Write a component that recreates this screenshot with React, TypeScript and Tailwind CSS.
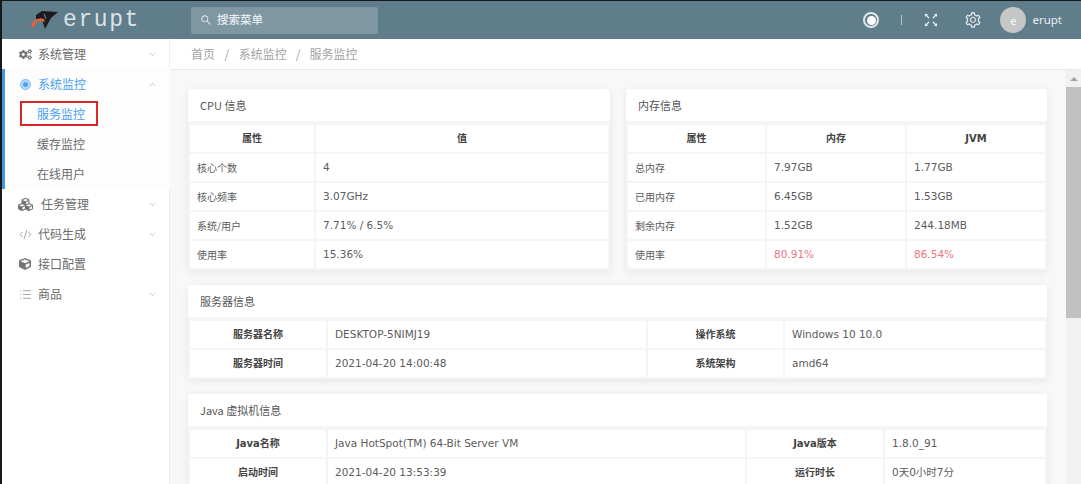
import type { ReactNode } from "react";
import { ChevronDown, ChevronUp, CodeXml, List } from "lucide-react";
import { FaCogs, FaCube, FaCubes } from "react-icons/fa";
import { AiOutlineFullscreen, AiOutlineSearch, AiOutlineSetting } from "react-icons/ai";

const cn = "font-['Noto_Sans_CJK_SC','Noto_Sans',sans-serif]";
const num = "font-['DejaVu_Sans','Noto_Sans_CJK_SC',sans-serif]";

function Logo() {
  return (
    <svg width="28" height="20" viewBox="0 0 28 20" className="shrink-0">
      <path d="M5 5 L11 1 L27 2 L20 8 L14 19 L11 10 L5 9 Z" fill="#1c1c1e" />
      <path d="M0 17 L2 11 Q8 7 13 9 L14 12 Q8 10 5 12 L3 17 Z" fill="#e8613a" />
      <path d="M13 4 L15 9" stroke="#6f8fb5" strokeWidth="1" />
    </svg>
  );
}

function MenuItem(props: { icon: ReactNode; label: string; arrow?: boolean; gap?: string }) {
  return (
    <div className="h-[30px] flex items-center pl-[15px] pr-[12px] text-[#6b6b6b]">
      <span className="w-[16px] flex justify-center shrink-0 text-[#747474]">{props.icon}</span>
      <span className={"text-[12px] flex-1 " + (props.gap ?? "ml-[5px]")}>{props.label}</span>
      {props.arrow && <ChevronDown size={9} strokeWidth={1.5} className="text-[#999]" />}
    </div>
  );
}

function Cell(props: { children: ReactNode; head?: boolean; tone?: "red" }) {
  return (
    <div
      className={
        "bg-white flex items-center h-[27px] " +
        (props.head
          ? "justify-center font-bold text-[#444] text-[10px] " + num
          : "px-[7px] " +
            (props.tone === "red" ? "text-[#ec7582] " : "text-[#5c5c5c] ") +
            "text-[10.5px] " + num)
      }
    >
      {props.children}
    </div>
  );
}

function Label(props: { children: ReactNode }) {
  return <div className={"bg-white flex items-center h-[27px] px-[7px] pb-[1px] text-[10px] text-[#5c5c5c] " + cn}>{props.children}</div>;
}

function Card(props: { title: string; children: ReactNode; className?: string }) {
  return (
    <section className={"bg-white rounded-[2px] shadow-[0_2px_8px_rgba(0,0,0,0.08)] " + (props.className ?? "")}>
      <h2 className={"h-[34px] flex items-center pl-[12px] text-[11px] text-[#555] border-b-2 border-[#f5f5f6] " + cn}>{props.title}</h2>
      {props.children}
    </section>
  );
}

const memory = [
  ["总内存", "7.97GB", "1.77GB"],
  ["已用内存", "6.45GB", "1.53GB"],
  ["剩余内存", "1.52GB", "244.18MB"],
];

const cpu = [
  ["核心个数", "4"],
  ["核心频率", "3.07GHz"],
  ["系统/用户", "7.71% / 6.5%"],
  ["使用率", "15.36%"],
];

export default function App() {
  return (
    <div className={"w-[1081px] h-[484px] overflow-hidden bg-[#17181c] pt-px pl-[2px] flex flex-col " + cn}>
      <header className="h-[38px] shrink-0 bg-[#607d8b] flex items-center text-white">
        <div className="w-[189px] flex items-center pl-[29px] shrink-0">
          <Logo />
          <span className="ml-[4px] mt-[1px] font-['Liberation_Mono',monospace] text-[23px] leading-none tracking-[1.6px] text-[#dce3e6]">erupt</span>
        </div>
        <div className="w-[187px] h-[27px] bg-[#7f97a2] rounded-[2px] flex items-center pl-[9px] text-[#e6ecef]">
          <AiOutlineSearch size={12} />
          <span className="ml-[5px] text-[11.5px] font-medium">搜索菜单</span>
        </div>
        <div className="flex-1" />
        <div className="w-[16px] h-[16px] rounded-full border-[2px] border-[#dfe6e9] flex items-center justify-center">
          <span className="w-[9px] h-[9px] rounded-full bg-white" />
        </div>
        <span className="ml-[22px] w-px h-[10px] bg-[#b5c4cb]" />
        <AiOutlineFullscreen size={18} className="ml-[20px] text-[#e8edf0]" />
        <AiOutlineSetting size={18} className="ml-[24px] text-[#e3e9ec]" />
        <span className="ml-[18px] w-[26px] h-[26px] rounded-full bg-[#c5c7c6] flex items-center justify-center text-[11px]">e</span>
        <span className="ml-[6px] mr-[19px] text-[11.5px] font-['Noto_Sans',sans-serif] text-[#e9eef0]">erupt</span>
      </header>

      <div className="flex flex-1 min-h-0 bg-white">
        <aside className="w-[168px] shrink-0 border-r border-[#eeeeee]">
          <MenuItem icon={<FaCogs size={13} />} label="系统管理" arrow />
          <div className="border-l-[3px] border-[#3d9be3] -mr-px bg-[#fdfdfd]">
            <div className="h-[30px] flex items-center pl-[12px] pr-[13px] text-[#4a9ff0]">
              <span className="w-[16px] flex justify-center shrink-0">
                <span className="w-[11px] h-[11px] rounded-full border border-[#7db9f2] bg-[#b9dafa] flex items-center justify-center">
                  <span className="w-[5px] h-[5px] rounded-full bg-[#4a9ff0]" />
                </span>
              </span>
              <span className="ml-[5px] text-[12px] flex-1">系统监控</span>
              <ChevronUp size={9} strokeWidth={1.5} className="text-[#999]" />
            </div>
            <div className="h-[30px] flex items-start pt-[2px] pl-[15px]">
              <span className="h-[25px] w-[78px] border-[2px] border-[#d9252b] flex items-center pl-[15px] text-[12px] text-[#4a9ff0]">服务监控</span>
            </div>
            <div className="h-[30px] flex items-center pl-[32px] text-[12px] text-[#6b6b6b]">缓存监控</div>
            <div className="h-[30px] flex items-center pl-[32px] text-[12px] text-[#6b6b6b]">在线用户</div>
          </div>
          <MenuItem icon={<FaCubes size={15} />} label="任务管理" arrow gap="ml-[8px]" />
          <MenuItem icon={<CodeXml size={13} strokeWidth={1.2} />} label="代码生成" arrow />
          <MenuItem icon={<FaCube size={12} />} label="接口配置" />
          <MenuItem icon={<List size={13} strokeWidth={1.2} />} label="商品" arrow />
        </aside>

        <main className="flex-1 min-w-0 flex flex-col">
          <nav className="h-[31px] shrink-0 bg-white border-b border-[#e8e8e8] flex items-center pl-[21px] text-[12px] text-[#a3a3a3]">
            <span>首页</span>
            <span className="mx-[9.5px]">/</span>
            <span>系统监控</span>
            <span className="mx-[9px]">/</span>
            <span>服务监控</span>
          </nav>
          <div className="flex-1 min-h-0 flex bg-[#f8f8f9]">
            <div className="flex-1 min-w-0 overflow-hidden pl-[18px] pr-[19px] pt-[19px]">
              <div className="flex gap-[16px]">
                <Card title="CPU 信息" className="w-[422px]">
                  <div className="grid grid-cols-[124px_1fr] gap-[2px] p-[2px] bg-[#f5f5f6]">
                    <Cell head>属性</Cell>
                    <Cell head>值</Cell>
                    {cpu.map((r) => [<Label key={r[0]}>{r[0]}</Label>, <Cell key={r[1]}>{r[1]}</Cell>])}
                  </div>
                </Card>
                <Card title="内存信息" className="w-[421px]">
                  <div className="grid grid-cols-[137px_138px_1fr] gap-[2px] p-[2px] bg-[#f5f5f6]">
                    <Cell head>属性</Cell>
                    <Cell head>内存</Cell>
                    <Cell head>JVM</Cell>
                    {memory.map((r) => [
                      <Label key={r[0]}>{r[0]}</Label>,
                      <Cell key={r[1]}>{r[1]}</Cell>,
                      <Cell key={r[2]}>{r[2]}</Cell>,
                    ])}
                    <Label>使用率</Label>
                    <Cell tone="red">80.91%</Cell>
                    <Cell tone="red">86.54%</Cell>
                  </div>
                </Card>
              </div>

              <Card title="服务器信息" className="mt-[15px]">
                <div className="grid grid-cols-[136px_318px_135px_1fr] gap-[2px] p-[2px] bg-[#f5f5f6]">
                  <Cell head>服务器名称</Cell>
                  <Cell>DESKTOP-5NIMJ19</Cell>
                  <Cell head>操作系统</Cell>
                  <Cell>Windows 10 10.0</Cell>
                  <Cell head>服务器时间</Cell>
                  <Cell>2021-04-20 14:00:48</Cell>
                  <Cell head>系统架构</Cell>
                  <Cell>amd64</Cell>
                </div>
              </Card>

              <Card title="Java 虚拟机信息" className="mt-[15px]">
                <div className="grid grid-cols-[136px_417px_136px_1fr] gap-[2px] p-[2px] bg-[#f5f5f6]">
                  <Cell head>Java名称</Cell>
                  <Cell>Java HotSpot(TM) 64-Bit Server VM</Cell>
                  <Cell head>Java版本</Cell>
                  <Cell>1.8.0_91</Cell>
                  <Cell head>启动时间</Cell>
                  <Cell>2021-04-20 13:53:39</Cell>
                  <Cell head>运行时长</Cell>
                  <Cell>0天0小时7分</Cell>
                </div>
              </Card>
            </div>
            <div className="w-[15px] shrink-0 bg-[#f1f1f1] flex flex-col items-center">
              <div className="h-[17px] shrink-0 flex items-center justify-center">
                <span className="w-0 h-0 border-x-[4px] border-x-transparent border-b-[4px] border-b-[#a3a3a3]" />
              </div>
              <div className="w-full h-[231px] bg-[#c1c1c1]" />
            </div>
          </div>
        </main>
      </div>
    </div>
  );
}
